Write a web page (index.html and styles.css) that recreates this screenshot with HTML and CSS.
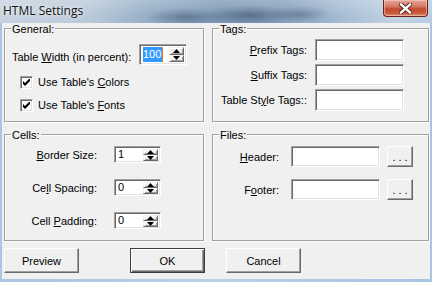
FILE: index.html
```html
<!DOCTYPE html>
<html lang="en">
  <head>
    <meta charset="UTF-8" />
    <meta name="viewport" content="width=device-width, initial-scale=1.0" />
    <title>HTML Settings</title>
    <link rel="stylesheet" href="styles.css">
  </head>
  <body>
    <div class="window">
      <div class="titlebar">
        <span class="title">HTML Settings</span>
        <span class="close">
          <svg width="13" height="11" viewBox="0 0 13 11">
            <path d="M2 1.5l9 8M11 1.5l-9 8" stroke="#4a1a12" stroke-width="4.2" stroke-linecap="square" />
            <path d="M2 1.5l9 8M11 1.5l-9 8" stroke="#fff" stroke-width="2.4" stroke-linecap="square" />
          </svg>
        </span>
      </div>

      <div class="client">
        <div class="groups">
          <section class="group general">
            <span class="legend">General:</span>
            <div class="width-row">
              <span class="width-label">Table <u>W</u>idth (in percent):</span>
              <div class="edit spin spin-big">
                <span class="value"><span class="selected">100</span><span class="caret"></span></span>
                <span class="arrows">
                  <span class="arrow"><svg width="7" height="4"><path d="M3.5 0L7 4H0z" /></svg></span>
                  <span class="arrow"><svg width="7" height="4"><path d="M0 0H7L3.5 4z" /></svg></span>
                </span>
              </div>
            </div>
            <div class="check">
              <span class="box"><svg width="7" height="7"><path d="M0 2l2 2 5-5v3l-5 5-2-2z" /></svg></span>
              <span>Use Table's <u>C</u>olors</span>
            </div>
            <div class="check">
              <span class="box"><svg width="7" height="7"><path d="M0 2l2 2 5-5v3l-5 5-2-2z" /></svg></span>
              <span>Use Table's <u>F</u>onts</span>
            </div>
          </section>

          <section class="group tags">
            <span class="legend">Tags:</span>
            <div class="tag-row">
              <span class="tag-label"><u>P</u>refix Tags:</span>
              <span class="edit tag-input"></span>
            </div>
            <div class="tag-row">
              <span class="tag-label"><u>S</u>uffix Tags:</span>
              <span class="edit tag-input"></span>
            </div>
            <div class="tag-row">
              <span class="tag-label">Table St<u>y</u>le Tags::</span>
              <span class="edit tag-input"></span>
            </div>
          </section>

          <section class="group cells">
            <span class="legend">Cells:</span>
            <div class="cell-row">
              <span class="cell-label"><u>B</u>order Size:</span>
              <div class="edit spin spin-small">
                <span class="value">1</span>
                <span class="arrows">
                  <span class="arrow"><svg width="7" height="4"><path d="M3.5 0L7 4H0z" /></svg></span>
                  <span class="arrow"><svg width="7" height="4"><path d="M0 0H7L3.5 4z" /></svg></span>
                </span>
              </div>
            </div>
            <div class="cell-row">
              <span class="cell-label">Ce<u>l</u>l Spacing:</span>
              <div class="edit spin spin-small">
                <span class="value">0</span>
                <span class="arrows">
                  <span class="arrow"><svg width="7" height="4"><path d="M3.5 0L7 4H0z" /></svg></span>
                  <span class="arrow"><svg width="7" height="4"><path d="M0 0H7L3.5 4z" /></svg></span>
                </span>
              </div>
            </div>
            <div class="cell-row">
              <span class="cell-label">Cell <u>P</u>adding:</span>
              <div class="edit spin spin-small">
                <span class="value">0</span>
                <span class="arrows">
                  <span class="arrow"><svg width="7" height="4"><path d="M3.5 0L7 4H0z" /></svg></span>
                  <span class="arrow"><svg width="7" height="4"><path d="M0 0H7L3.5 4z" /></svg></span>
                </span>
              </div>
            </div>
          </section>

          <section class="group files">
            <span class="legend">Files:</span>
            <div class="file-row">
              <span class="file-label"><u>H</u>eader:</span>
              <span class="edit file-input"></span>
              <button class="btn browse">...</button>
            </div>
            <div class="file-row">
              <span class="file-label">F<u>o</u>oter:</span>
              <span class="edit file-input"></span>
              <button class="btn browse">...</button>
            </div>
          </section>
        </div>

        <div class="buttons">
          <button class="btn preview">Preview</button>
          <button class="btn default ok">OK</button>
          <button class="btn cancel">Cancel</button>
        </div>
      </div>
    </div>
  </body>
</html>
```

FILE: styles.css
```css
body {
  margin: 0;
  font-family: "Liberation Sans", Arial, sans-serif;
  font-size: 11px;
  color: #000;
}
.window {
  width: 432px;
  height: 282px;
  display: flex;
  flex-direction: column;
  background: linear-gradient(90deg, #a9c6e4, #b7d0ea 50%, #a6c4e4);
}
.titlebar {
  height: 23px;
  flex: none;
  display: flex;
  align-items: flex-start;
  background:
    linear-gradient(rgba(255, 255, 255, 0.22), rgba(255, 255, 255, 0) 70%),
    radial-gradient(ellipse 45px 10px at 250px 15px, rgba(35, 55, 85, 0.45), rgba(35, 55, 85, 0)),
    radial-gradient(ellipse 40px 9px at 185px 17px, rgba(45, 65, 95, 0.4), rgba(45, 65, 95, 0)),
    radial-gradient(ellipse 30px 8px at 300px 14px, rgba(45, 65, 95, 0.35), rgba(45, 65, 95, 0)),
    linear-gradient(90deg, #c6d3df 0, #b9c9d9 90px, #95adc6 150px, #7e98b5 220px, #88a1bd 290px, #a8bed5 345px, #c2d2e3 395px, #b8cde2 432px);
}
.title {
  font-family: "Open Sans", "Noto Sans", sans-serif;
  font-size: 12px;
  line-height: 16px;
  margin: 3px 0 0 3px;
  color: #111;
  text-shadow: 0 0 6px rgba(255, 255, 255, 0.9), 0 0 3px rgba(255, 255, 255, 0.7);
}
.close {
  margin-left: auto;
  margin-right: 4px;
  width: 45px;
  height: 17px;
  box-sizing: border-box;
  display: flex;
  align-items: center;
  justify-content: center;
  border: 1px solid #6a2316;
  border-top: none;
  border-radius: 0 0 4px 4px;
  background: linear-gradient(#e3a294 0%, #d67a66 40%, #c44a2f 55%, #c9553a 80%, #dc8b6e 100%);
  box-shadow: inset 0 0 1px 1px rgba(255, 220, 210, 0.55);
}
.client {
  flex: 1;
  margin: 0 2px 3px;
  padding: 5px 2px 0;
  background: #f0f0f0;
}
.groups {
  display: grid;
  grid-template-columns: 200px 217px;
  grid-template-rows: 94px 107px;
  column-gap: 8px;
  row-gap: 12px;
}
.group {
  position: relative;
  border: 1px solid #a0a0a0;
  box-shadow: inset 1px 1px #fff, 1px 1px #fff;
  display: flex;
  flex-direction: column;
}
.legend {
  position: absolute;
  top: -6px;
  left: 6px;
  padding: 0 1px;
  line-height: 13px;
  background: #f0f0f0;
}
.edit {
  box-sizing: border-box;
  background: #fff;
  border: 1px solid;
  border-color: #a0a0a0 #fff #fff #a0a0a0;
  box-shadow: inset 1px 1px #696969, inset -1px -1px #e3e3e3;
}

/* general */
.general {
  padding: 15px 0 0 7px;
}
.width-row {
  display: flex;
  align-items: center;
  height: 21px;
}
.width-label {
  width: 127px;
  padding-top: 4px;
}
.spin {
  display: flex;
  padding: 2px;
}
.spin-big {
  width: 48px;
  height: 21px;
}
.spin-small {
  width: 47px;
  height: 17px;
}
.value {
  flex: 1;
  display: flex;
  align-items: center;
  padding-left: 1px;
  line-height: 13px;
}
.selected {
  background: #3399ff;
  color: #fff;
  padding: 1px 1px 1px 0;
}
.caret {
  width: 1px;
  height: 15px;
  background: #e8821e;
}
.arrows {
  width: 15px;
  display: flex;
  flex-direction: column;
}
.arrow {
  flex: 1;
  display: flex;
  align-items: center;
  justify-content: center;
  box-sizing: border-box;
  background: #f0f0f0;
  border: 1px solid;
  border-color: #f0f0f0 #696969 #696969 #f0f0f0;
  box-shadow: inset 1px 1px #fff, inset -1px -1px #a0a0a0;
}
.arrow svg {
  display: block;
}
.check {
  display: flex;
  align-items: center;
  height: 13px;
  margin: 11px 0 0 8px;
  line-height: 13px;
}
.check + .check {
  margin-top: 10px;
}
.box {
  width: 13px;
  height: 13px;
  margin-right: 5px;
  box-sizing: border-box;
  display: flex;
  align-items: center;
  justify-content: center;
  background: #fff;
  border: 1px solid;
  border-color: #a0a0a0 #fff #fff #a0a0a0;
  box-shadow: inset 1px 1px #696969, inset -1px -1px #e3e3e3;
}

/* tags */
.tags {
  padding-top: 10px;
  gap: 3px;
}
.tag-row {
  display: flex;
  align-items: center;
  height: 22px;
}
.tag-label {
  width: 94px;
  text-align: right;
  margin-right: 8px;
}
.tag-input {
  width: 89px;
  height: 22px;
}

/* cells */
.cells {
  padding-top: 11px;
  gap: 16px;
}
.cell-row {
  display: flex;
  align-items: center;
  height: 17px;
}
.cell-label {
  width: 92px;
  text-align: right;
  margin-right: 17px;
}

/* files */
.files {
  padding-top: 11px;
  gap: 12px;
}
.file-row {
  display: flex;
  align-items: center;
  height: 21px;
}
.file-label {
  width: 66px;
  text-align: right;
  margin-right: 12px;
}
.file-input {
  width: 89px;
  height: 21px;
  margin-right: 7px;
}

/* buttons */
.btn {
  font: inherit;
  color: #000;
  padding: 0;
  background: #f0f0f0;
  box-sizing: border-box;
  border: 1px solid;
  border-color: #fff #696969 #696969 #fff;
  box-shadow: inset -1px -1px #a0a0a0, inset 1px 1px #f0f0f0;
  border-radius: 0;
}
.browse {
  width: 26px;
  height: 21px;
  letter-spacing: 3px;
  padding-left: 3px;
}
.buttons {
  display: flex;
  margin-top: 7px;
}
.buttons .btn {
  width: 75px;
  height: 25px;
}
.btn.default {
  border-color: #3c3c3c;
  box-shadow: inset 1px 1px #fff, inset -1px -1px #696969, inset -2px -2px #a0a0a0;
}
.ok {
  margin-left: 51px;
}
.cancel {
  margin-left: 21px;
}
```
